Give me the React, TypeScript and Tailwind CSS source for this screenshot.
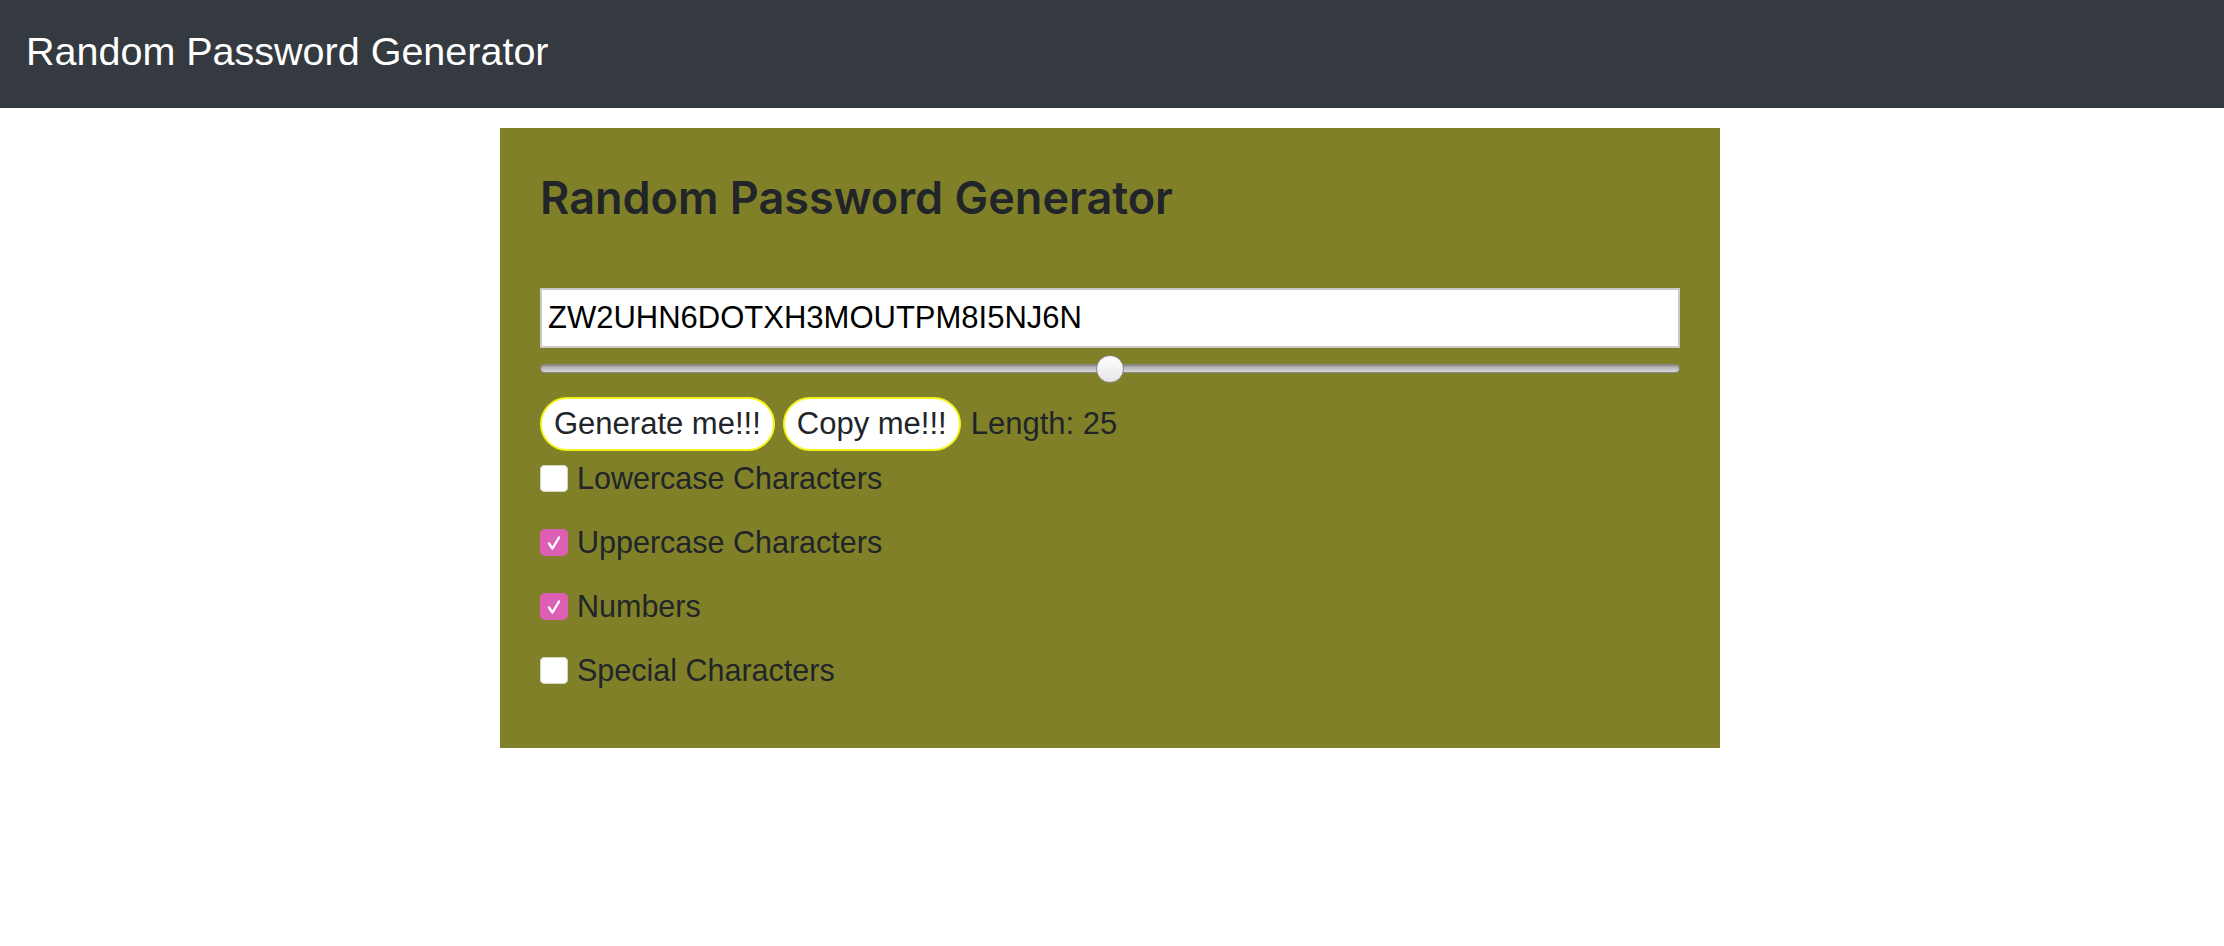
import React, { useState } from 'react';

const MIN_LEN = 0;
const MAX_LEN = 50;

const Checkbox: React.FC<{ checked: boolean; onToggle: () => void }> = ({ checked, onToggle }) => (
  <button
    type="button"
    onClick={onToggle}
    className={`mt-[10px] mr-[9px] flex h-[27px] w-[28px] shrink-0 items-center justify-center rounded-[5px] ${
      checked ? 'bg-[#dc5fb4]' : 'bg-white shadow-[inset_0_0_0_1px_#d4d4c0]'
    }`}
  >
    {checked && (
      <svg width="20" height="20" viewBox="0 0 20 20" fill="none">
        <path d="M5 10.5l3.5 5 6.5-11" stroke="white" strokeWidth="2.4" strokeLinecap="round" strokeLinejoin="round" />
      </svg>
    )}
  </button>
);

const App: React.FC = () => {
  const [password, setPassword] = useState('ZW2UHN6DOTXH3MOUTPM8I5NJ6N');
  const [length, setLength] = useState(25);
  const [lower, setLower] = useState(false);
  const [upper, setUpper] = useState(true);
  const [numbers, setNumbers] = useState(true);
  const [special, setSpecial] = useState(false);

  const generate = () => {
    let chars = '';
    if (lower) chars += 'abcdefghijklmnopqrstuvwxyz';
    if (upper) chars += 'ABCDEFGHIJKLMNOPQRSTUVWXYZ';
    if (numbers) chars += '0123456789';
    if (special) chars += '!@#$%^&*()_+-=[]{}';
    if (!chars) return;
    let out = '';
    for (let i = 0; i < length; i++) out += chars[Math.floor(Math.random() * chars.length)];
    setPassword(out);
  };

  const copy = () => {
    navigator.clipboard?.writeText(password).catch(() => {});
  };

  const handleTrackClick = (e: React.MouseEvent<HTMLDivElement>) => {
    const rect = e.currentTarget.getBoundingClientRect();
    const frac = Math.min(1, Math.max(0, (e.clientX - rect.left - 14) / (rect.width - 28)));
    setLength(Math.round(MIN_LEN + frac * (MAX_LEN - MIN_LEN)));
  };

  const frac = (length - MIN_LEN) / (MAX_LEN - MIN_LEN);

  const options = [
    { label: 'Lowercase Characters', checked: lower, toggle: () => setLower(!lower) },
    { label: 'Uppercase Characters', checked: upper, toggle: () => setUpper(!upper) },
    { label: 'Numbers', checked: numbers, toggle: () => setNumbers(!numbers) },
    { label: 'Special Characters', checked: special, toggle: () => setSpecial(!special) },
  ];

  return (
    <div className="min-h-screen bg-white font-['Liberation_Sans',Arial,sans-serif]">
      <nav className="h-[108px] bg-[#343a40] pl-[26px] pt-[32px]">
        <span className="block text-[39.5px] leading-[39px] text-white">Random Password Generator</span>
      </nav>

      <div className="pr-[4px]">
        <div className="mx-auto mt-[20px] w-[1220px] bg-[#808028] px-[40px] pt-[47px] pb-[55px] text-[#212529]">
          <h1 className="font-['Inter',sans-serif] text-[45px] leading-[45px] font-semibold">
            Random Password Generator
          </h1>

          <input
            type="text"
            value={password}
            onChange={(e) => setPassword(e.target.value)}
            className="mt-[68px] block h-[60px] w-full border-2 border-[#c9c9c9] bg-white pl-[6px] text-[31px] text-black outline-none"
          />

          <div className="relative mt-[7px] h-[28px] cursor-pointer" onClick={handleTrackClick}>
            <div className="absolute top-[9px] right-0 left-0 h-[9px] rounded-full border border-[#8c8c8c] bg-gradient-to-b from-[#a4a4a4] to-[#d8d8d8] shadow-[inset_0_1px_1px_rgba(0,0,0,0.2)]" />
            <div
              className="absolute top-0 h-[28px] w-[28px] rounded-full border border-[#8a8a8a] bg-gradient-to-b from-white to-[#e6e6e6]"
              style={{ left: `calc(${frac} * (100% - 28px))` }}
            />
          </div>

          <div className="mt-[14px] flex items-center text-[31px]">
            <button
              type="button"
              onClick={generate}
              className="flex h-[54px] items-center rounded-full border-2 border-[#f4f41c] bg-white px-[12px]"
            >
              Generate me!!!
            </button>
            <button
              type="button"
              onClick={copy}
              className="ml-[8px] flex h-[54px] items-center rounded-full border-2 border-[#f4f41c] bg-white px-[12px]"
            >
              Copy me!!!
            </button>
            <span className="ml-[10px]">Length: {length}</span>
          </div>

          <div className="mt-[4px] flex flex-col gap-[18px]">
            {options.map((o) => (
              <div key={o.label} className="flex items-start">
                <Checkbox checked={o.checked} onToggle={o.toggle} />
                <span className="text-[30.5px] leading-[46px]">{o.label}</span>
              </div>
            ))}
          </div>
        </div>
      </div>
    </div>
  );
};

export default App;
